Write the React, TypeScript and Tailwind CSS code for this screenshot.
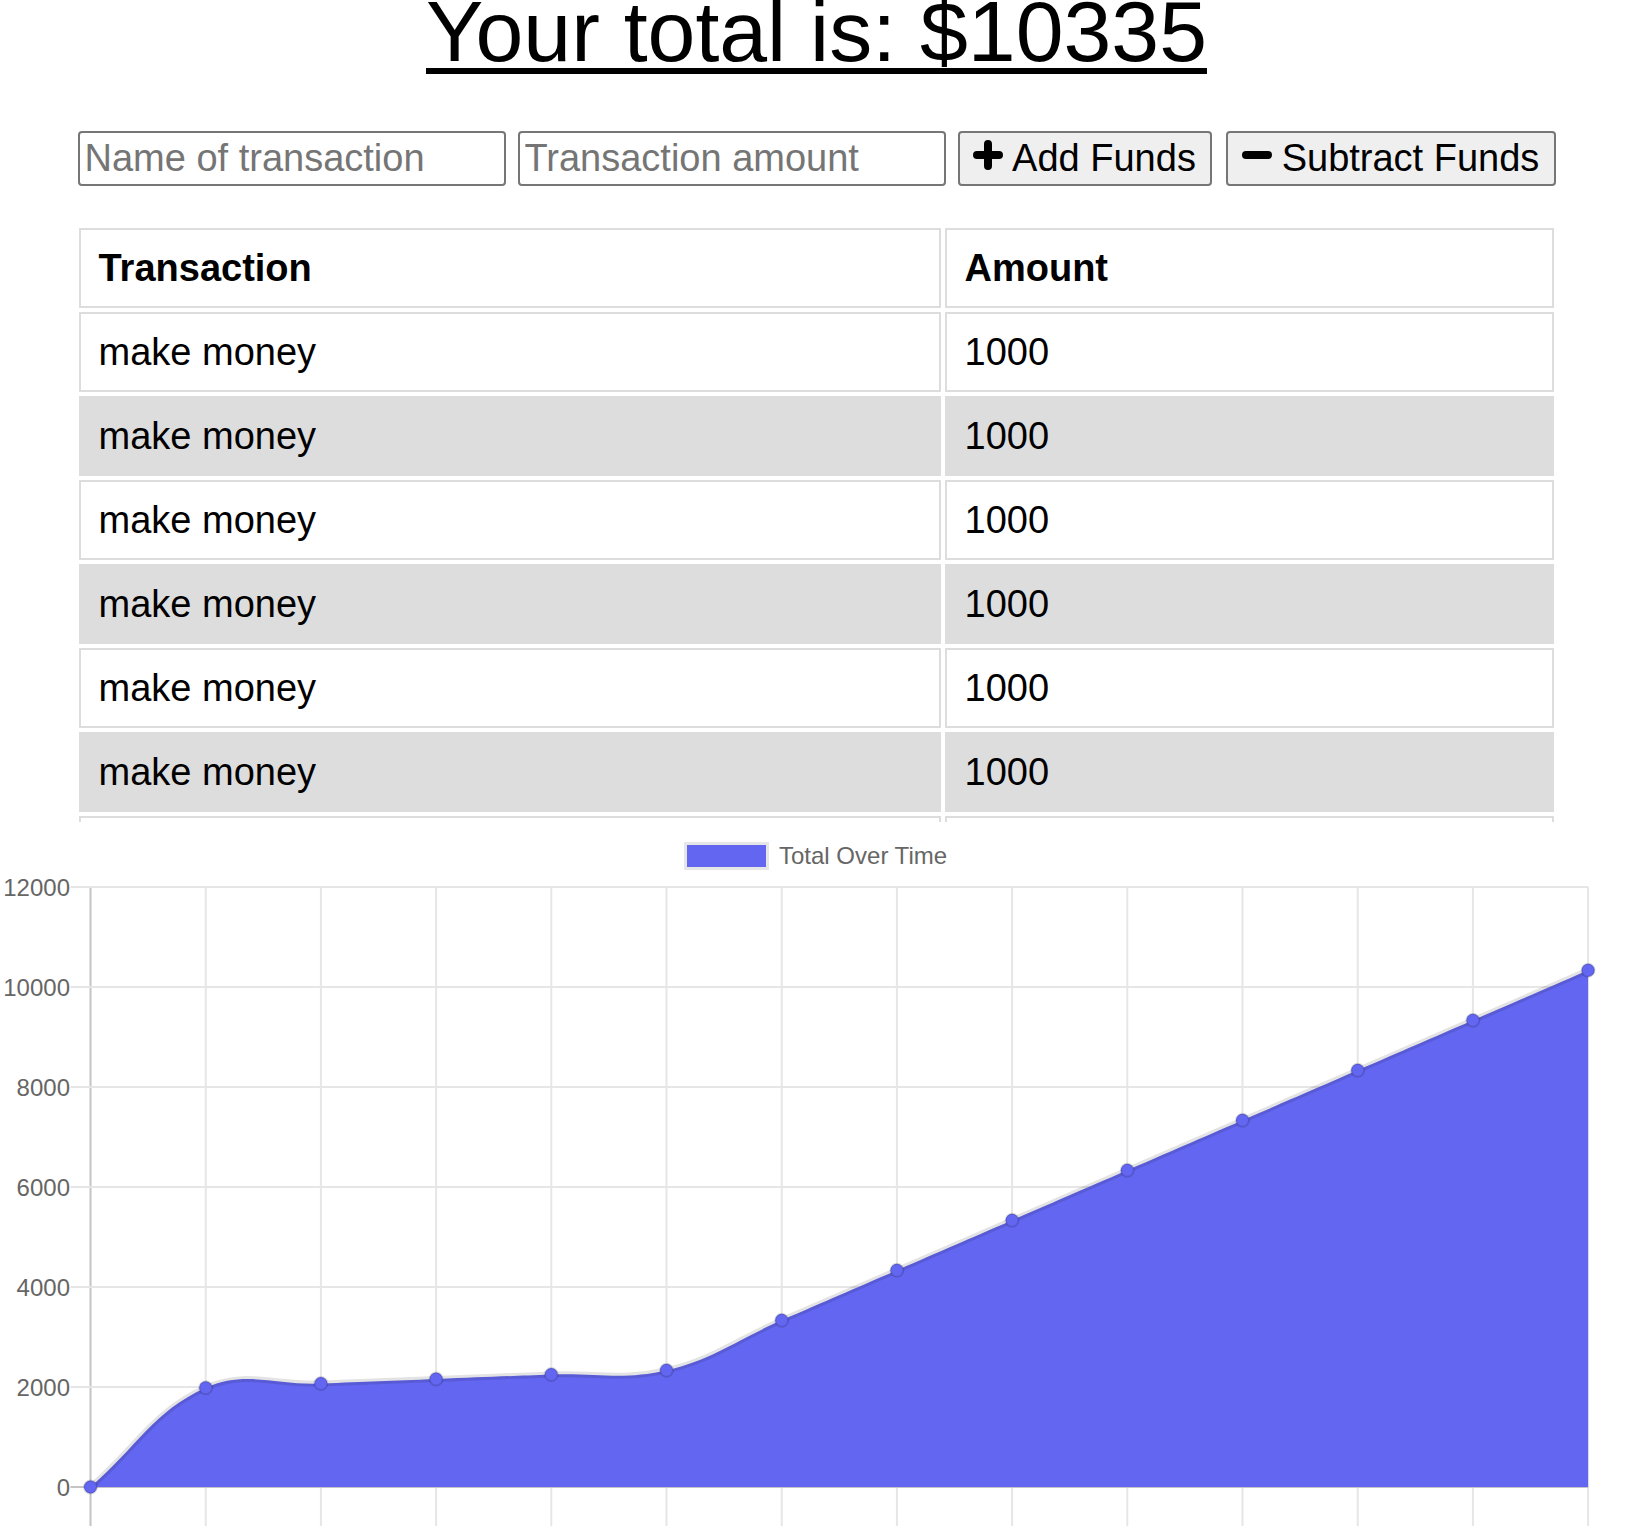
import React from 'react';

const rows = Array.from({ length: 7 }, () => ({ name: 'make money', amount: 1000 }));

// running totals drawn in the chart
const totals = [0, 1985, 2070, 2160, 2250, 2335, 3335, 4335, 5335, 6335, 7335, 8335, 9335, 10335];

const X0 = 90.5;
const STEP = 115.2;
const BASE = 665;
const SCALE = 0.05;
const BLUE = '#6366f1';

type Pt = { x: number; y: number };

function buildPaths() {
  const pts: Pt[] = totals.map((v, i) => ({ x: X0 + i * STEP, y: BASE - v * SCALE }));
  // same spline as chart.js (tension 0.4)
  const cps = pts.map((curr, i) => {
    const prev = pts[i - 1] ?? curr;
    const next = pts[i + 1] ?? curr;
    const d01 = Math.hypot(curr.x - prev.x, curr.y - prev.y);
    const d12 = Math.hypot(next.x - curr.x, next.y - curr.y);
    let s01 = d01 / (d01 + d12);
    let s12 = d12 / (d01 + d12);
    if (isNaN(s01)) s01 = 0;
    if (isNaN(s12)) s12 = 0;
    const fa = 0.4 * s01;
    const fb = 0.4 * s12;
    return {
      prev: { x: curr.x - fa * (next.x - prev.x), y: curr.y - fa * (next.y - prev.y) },
      next: { x: curr.x + fb * (next.x - prev.x), y: curr.y + fb * (next.y - prev.y) },
    };
  });
  let d = `M${pts[0].x} ${pts[0].y}`;
  for (let i = 0; i < pts.length - 1; i++) {
    const a = cps[i].next;
    const b = cps[i + 1].prev;
    const p = pts[i + 1];
    d += ` C${a.x} ${a.y} ${b.x} ${b.y} ${p.x} ${p.y}`;
  }
  const last = pts[pts.length - 1];
  const fill = `${d} L${last.x} ${BASE} L${pts[0].x} ${BASE} Z`;
  return { pts, line: d, fill };
}

function PlusIcon() {
  return (
    <svg width="30" height="30" viewBox="0 0 30 30" className="mb-[7px] shrink-0">
      <path d="M15 4 V26 M4 15 H26" stroke="black" strokeWidth="8" strokeLinecap="round" />
    </svg>
  );
}

function MinusIcon() {
  return (
    <svg width="30" height="30" viewBox="0 0 30 30" className="mb-[7px] shrink-0">
      <path d="M4 15 H26" stroke="black" strokeWidth="8" strokeLinecap="round" />
    </svg>
  );
}

function Chart() {
  const { pts, line, fill } = buildPaths();
  const labels = [12000, 10000, 8000, 6000, 4000, 2000, 0];

  return (
    <svg width="1650" height="704" className="block">
      {/* legend */}
      <rect x="685.5" y="21.5" width="82" height="25" fill={BLUE} stroke="#e6e6e6" strokeWidth="3" />
      <text x="779" y="41.5" fontSize="24" fill="#666">
        Total Over Time
      </text>

      {/* grid */}
      {totals.map((_, i) => (
        <line
          key={'v' + i}
          x1={X0 + i * STEP}
          x2={X0 + i * STEP}
          y1={65}
          y2={704}
          stroke={i === 0 ? '#c4c4c4' : '#e6e6e6'}
          strokeWidth="2"
        />
      ))}
      {labels.map((v, k) => (
        <g key={'h' + v}>
          <line
            x1={70.5}
            x2={X0 + 13 * STEP}
            y1={65 + k * 100}
            y2={65 + k * 100}
            stroke={v === 0 ? '#c4c4c4' : '#e6e6e6'}
            strokeWidth="2"
          />
          <text x="70" y={65 + k * 100 + 8.5} fontSize="24" fill="#666" textAnchor="end">
            {v}
          </text>
        </g>
      ))}

      {/* data */}
      <path d={fill} fill={BLUE} />
      <path d={line} fill="none" stroke="rgba(0,0,0,0.11)" strokeWidth="6" />
      {pts.map((p, i) => (
        <circle key={i} cx={p.x} cy={p.y} r="6.5" fill={BLUE} stroke="rgba(0,0,0,0.14)" strokeWidth="2" />
      ))}
    </svg>
  );
}

export default function App() {
  return (
    <div className="bg-white text-black font-['Liberation_Sans',Arial,sans-serif]">
      <div className="w-[1633px]">
        <h1 className="text-center text-[86px] leading-[62px] font-normal underline decoration-[6px] underline-offset-[7px]">
          Your total is: $10335
        </h1>

        <div className="w-[1478px] mx-auto">
          {/* Form */}
          <div className="mt-[69px] flex gap-[12px]">
            <input
              type="text"
              placeholder="Name of transaction"
              className="w-[428px] h-[55px] border-2 border-[#767676] rounded-[4px] px-[5px] text-[38px] placeholder:text-[#757575] outline-none"
            />
            <input
              type="number"
              placeholder="Transaction amount"
              className="w-[428px] h-[55px] border-2 border-[#767676] rounded-[4px] px-[5px] text-[38px] placeholder:text-[#757575] outline-none"
            />
            <button className="w-[254px] h-[55px] border-2 border-[#767676] rounded-[4px] bg-[#efefef] flex items-center justify-center gap-[9px] text-[38px]">
              <PlusIcon />
              <span>Add Funds</span>
            </button>
            <button className="ml-[2px] w-[330px] h-[55px] border-2 border-[#767676] rounded-[4px] bg-[#efefef] flex items-center justify-center gap-[10px] text-[38px]">
              <MinusIcon />
              <span>Subtract Funds</span>
            </button>
          </div>

          {/* Transactions */}
          <div className="mt-[38px] h-[598px] overflow-hidden">
            <table className="-ml-[3px] w-[1483px] border-separate border-spacing-[4px] text-[38px] leading-[44px]">
              <thead>
                <tr>
                  <th className="w-[862px] border-2 border-[#dddddd] px-[18px] py-[16px] text-left font-bold">Transaction</th>
                  <th className="border-2 border-[#dddddd] px-[18px] py-[16px] text-left font-bold">Amount</th>
                </tr>
              </thead>
              <tbody>
                {rows.map((row, i) => (
                  <tr key={i} className={i % 2 === 1 ? 'bg-[#dddddd]' : ''}>
                    <td className="border-2 border-[#dddddd] px-[18px] py-[16px]">{row.name}</td>
                    <td className="border-2 border-[#dddddd] px-[18px] py-[16px]">{row.amount}</td>
                  </tr>
                ))}
              </tbody>
            </table>
          </div>
        </div>
      </div>

      <Chart />
    </div>
  );
}
